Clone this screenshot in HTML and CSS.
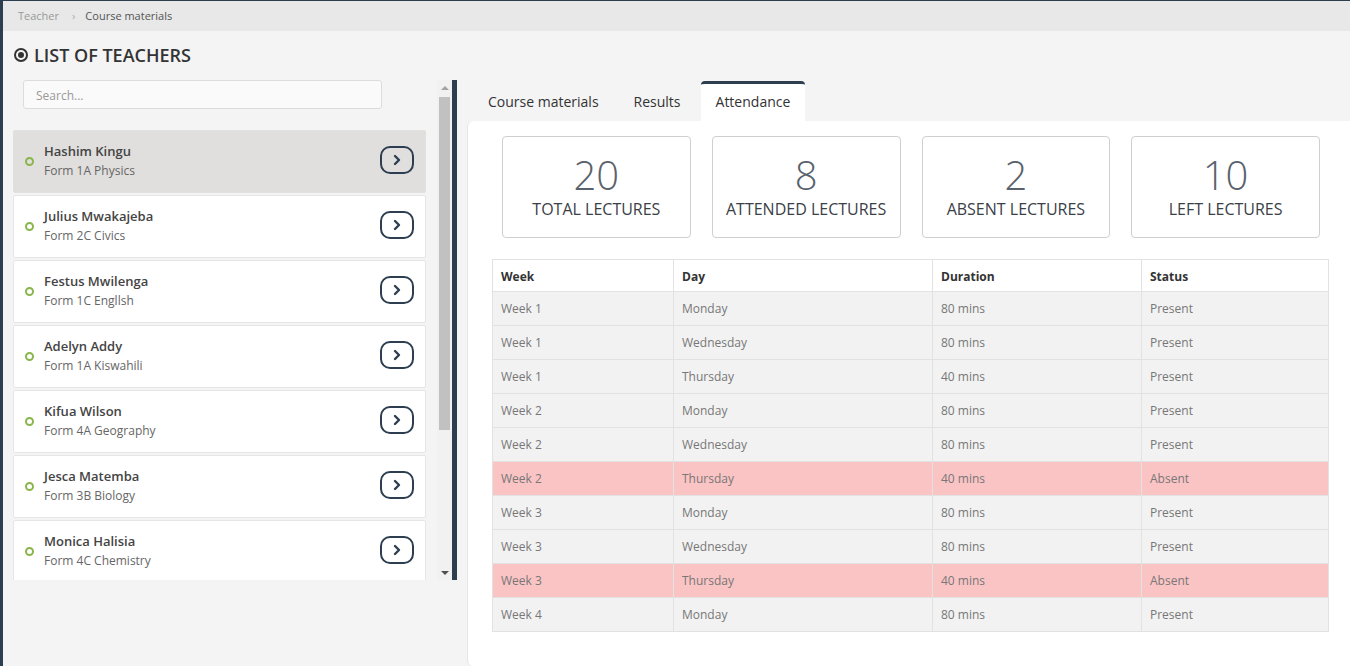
FILE: index.html
```html
<!DOCTYPE html>
<html>
<head>
<meta charset="utf-8">
<title>Course materials</title>
<link rel="stylesheet" href="styles.css">
</head>
<body>
<div class="app">
  <div class="breadcrumb">
    <span class="crumb">Teacher</span>
    <span class="sep">›</span>
    <span class="crumb current">Course materials</span>
  </div>
  <h1 class="title"><span class="radio-icon"><span></span></span>LIST OF TEACHERS</h1>
  <div class="content">
    <div class="left">
      <div class="list">
        <input class="search" type="text" placeholder="Search...">
        <div class="item selected">
          <span class="dot"></span>
          <div class="info"><div class="name">Hashim Kingu</div><div class="sub">Form 1A Physics</div></div>
          <span class="go"><svg viewBox="0 0 10 12" width="10" height="12"><path d="M3 2 L7 6 L3 10" fill="none" stroke="#2c3e50" stroke-width="2.4" stroke-linecap="round" stroke-linejoin="round"/></svg></span>
        </div>
        <div class="item">
          <span class="dot"></span>
          <div class="info"><div class="name">Julius Mwakajeba</div><div class="sub">Form 2C Civics</div></div>
          <span class="go"><svg viewBox="0 0 10 12" width="10" height="12"><path d="M3 2 L7 6 L3 10" fill="none" stroke="#2c3e50" stroke-width="2.4" stroke-linecap="round" stroke-linejoin="round"/></svg></span>
        </div>
        <div class="item">
          <span class="dot"></span>
          <div class="info"><div class="name">Festus Mwilenga</div><div class="sub">Form 1C Engllsh</div></div>
          <span class="go"><svg viewBox="0 0 10 12" width="10" height="12"><path d="M3 2 L7 6 L3 10" fill="none" stroke="#2c3e50" stroke-width="2.4" stroke-linecap="round" stroke-linejoin="round"/></svg></span>
        </div>
        <div class="item">
          <span class="dot"></span>
          <div class="info"><div class="name">Adelyn Addy</div><div class="sub">Form 1A Kiswahili</div></div>
          <span class="go"><svg viewBox="0 0 10 12" width="10" height="12"><path d="M3 2 L7 6 L3 10" fill="none" stroke="#2c3e50" stroke-width="2.4" stroke-linecap="round" stroke-linejoin="round"/></svg></span>
        </div>
        <div class="item">
          <span class="dot"></span>
          <div class="info"><div class="name">Kifua Wilson</div><div class="sub">Form 4A Geography</div></div>
          <span class="go"><svg viewBox="0 0 10 12" width="10" height="12"><path d="M3 2 L7 6 L3 10" fill="none" stroke="#2c3e50" stroke-width="2.4" stroke-linecap="round" stroke-linejoin="round"/></svg></span>
        </div>
        <div class="item">
          <span class="dot"></span>
          <div class="info"><div class="name">Jesca Matemba</div><div class="sub">Form 3B Biology</div></div>
          <span class="go"><svg viewBox="0 0 10 12" width="10" height="12"><path d="M3 2 L7 6 L3 10" fill="none" stroke="#2c3e50" stroke-width="2.4" stroke-linecap="round" stroke-linejoin="round"/></svg></span>
        </div>
        <div class="item">
          <span class="dot"></span>
          <div class="info"><div class="name">Monica Halisia</div><div class="sub">Form 4C Chemistry</div></div>
          <span class="go"><svg viewBox="0 0 10 12" width="10" height="12"><path d="M3 2 L7 6 L3 10" fill="none" stroke="#2c3e50" stroke-width="2.4" stroke-linecap="round" stroke-linejoin="round"/></svg></span>
        </div>
      </div>
      <div class="scrollbar">
        <div class="sb-btn"><span class="arrow up"></span></div>
        <div class="sb-track"><div class="sb-thumb"></div></div>
        <div class="sb-btn"><span class="arrow down"></span></div>
      </div>
    </div>
    <div class="right">
      <div class="tabs">
        <span class="tab">Course materials</span>
        <span class="tab">Results</span>
        <span class="tab active">Attendance</span>
      </div>
      <div class="card">
        <div class="stats">
          <div class="stat"><div class="num">20</div><div class="label">TOTAL LECTURES</div></div>
          <div class="stat"><div class="num">8</div><div class="label">ATTENDED LECTURES</div></div>
          <div class="stat"><div class="num">2</div><div class="label">ABSENT LECTURES</div></div>
          <div class="stat"><div class="num">10</div><div class="label">LEFT LECTURES</div></div>
        </div>
        <table class="att">
          <colgroup><col class="c1"><col class="c2"><col class="c3"><col class="c4"></colgroup>
          <thead><tr><th>Week</th><th>Day</th><th>Duration</th><th>Status</th></tr></thead>
          <tbody>
            <tr><td>Week 1</td><td>Monday</td><td>80 mins</td><td>Present</td></tr>
            <tr><td>Week 1</td><td>Wednesday</td><td>80 mins</td><td>Present</td></tr>
            <tr><td>Week 1</td><td>Thursday</td><td>40 mins</td><td>Present</td></tr>
            <tr><td>Week 2</td><td>Monday</td><td>80 mins</td><td>Present</td></tr>
            <tr><td>Week 2</td><td>Wednesday</td><td>80 mins</td><td>Present</td></tr>
            <tr class="absent"><td>Week 2</td><td>Thursday</td><td>40 mins</td><td>Absent</td></tr>
            <tr><td>Week 3</td><td>Monday</td><td>80 mins</td><td>Present</td></tr>
            <tr><td>Week 3</td><td>Wednesday</td><td>80 mins</td><td>Present</td></tr>
            <tr class="absent"><td>Week 3</td><td>Thursday</td><td>40 mins</td><td>Absent</td></tr>
            <tr><td>Week 4</td><td>Monday</td><td>80 mins</td><td>Present</td></tr>
          </tbody>
        </table>
      </div>
    </div>
  </div>
</div>
</body>
</html>
```

FILE: styles.css
```css
* { box-sizing: border-box; }
html, body { margin: 0; padding: 0; height: 100%; }
body {
  background: #2c3e50;
  font-family: "Open Sans", "Liberation Sans", sans-serif;
  overflow: hidden;
}
.app {
  margin: 1px 0 0 3px;
  height: 665px;
  background: #f4f4f4;
  display: flex;
  flex-direction: column;
}
.breadcrumb {
  height: 30px;
  background: #e8e8e8;
  display: flex;
  align-items: center;
  padding: 0 0 2px 15px;
  font-size: 11px;
  color: #999;
  flex-shrink: 0;
}
.breadcrumb .sep { margin: 0 10px 0 13px; color: #aaa; }
.breadcrumb .current { color: #555; }
.title {
  margin: 12px 0 0 11px;
  font-size: 18px;
  line-height: 24px;
  font-weight: 600;
  color: #333;
  display: flex;
  align-items: center;
}
.radio-icon {
  width: 14px;
  height: 14px;
  border: 2px solid #333;
  border-radius: 50%;
  display: flex;
  align-items: center;
  justify-content: center;
  margin-right: 6px;
}
.radio-icon span {
  width: 6px;
  height: 6px;
  background: #333;
  border-radius: 50%;
}
.content {
  display: flex;
  margin-top: 13px;
  padding-left: 10px;
  flex: 1;
  gap: 10px;
  min-height: 0;
}
.left {
  width: 444px;
  height: 500px;
  flex-shrink: 0;
  display: flex;
  border-right: 5px solid #2c3e50;
}
.list {
  flex: 1;
  overflow: hidden;
  padding-right: 11px;
}
.scrollbar {
  width: 15px;
  background: #f1f1f1;
  display: flex;
  flex-direction: column;
}
.sb-btn {
  height: 15px;
  display: flex;
  align-items: center;
  justify-content: center;
}
.arrow {
  width: 0;
  height: 0;
  border-left: 4px solid transparent;
  border-right: 4px solid transparent;
}
.arrow.up { border-bottom: 4px solid #a3a3a3; }
.arrow.down { border-top: 4px solid #505050; }
.sb-track { flex: 1; padding: 2px 2px 0 2px; }
.sb-thumb { height: 333px; background: #c1c1c1; }
.search {
  display: block;
  margin: 0 0 21px 10px;
  width: 359px;
  height: 29px;
  border: 1px solid #dcdcdc;
  border-radius: 3px;
  background: #fafafa;
  padding: 2px 12px 0;
  font-family: inherit;
  font-size: 12px;
  color: #555;
  outline: none;
}
.search::placeholder { color: #999; }
.item {
  height: 63px;
  margin-bottom: 2px;
  background: #fff;
  border: 1px solid #e6e6e6;
  border-radius: 2px;
  display: flex;
  align-items: center;
  padding: 0 11px;
}
.item.selected { background: #e0dfdd; border-color: #e2e1df; }
.dot {
  width: 9px;
  height: 9px;
  border: 2px solid #8ab54a;
  border-radius: 50%;
  flex-shrink: 0;
  margin-right: 10px;
}
.info { flex: 1; margin-top: -1px; }
.name { font-size: 13px; line-height: 20px; font-weight: 600; color: #444; }
.sub { font-size: 12px; line-height: 20px; color: #666; }
.go {
  width: 34px;
  height: 28px;
  border: 2px solid #2c3e50;
  border-radius: 10px;
  display: flex;
  align-items: center;
  justify-content: center;
  margin-top: -3px;
}
.go svg { display: block; }
.right {
  flex: 1;
  display: flex;
  flex-direction: column;
  min-width: 0;
}
.tabs {
  display: flex;
  gap: 5px;
  margin-top: 1px;
  padding-left: 6px;
  height: 40px;
  flex-shrink: 0;
}
.tab {
  padding: 0 15px 2px;
  display: flex;
  align-items: center;
  font-size: 14px;
  color: #333;
  border-top: 3px solid transparent;
  border-radius: 4px 4px 0 0;
}
.tab.active { background: #fff; border-top-color: #2c3e50; }
.card {
  flex: 1;
  background: #fff;
  border-left: 1px solid #e6e6e6;
  border-radius: 6px 0 0 6px;
  padding: 15px 21px 0 24px;
}
.stats {
  display: grid;
  grid-template-columns: repeat(4, 1fr);
  gap: 21px;
  padding: 0 9px 0 10px;
}
.stat {
  height: 102px;
  border: 1px solid #cfcfcf;
  border-radius: 4px;
  text-align: center;
  padding-top: 16px;
}
.num {
  font-size: 40px;
  line-height: 44px;
  font-weight: 300;
  color: #59626c;
}
.label {
  font-size: 16px;
  line-height: 24px;
  color: #3a4046;
}
.att {
  margin-top: 21px;
  width: 100%;
  border-collapse: collapse;
  table-layout: fixed;
  font-size: 12px;
}
.c1 { width: 181px; }
.c2 { width: 259px; }
.c3 { width: 209px; }
.c4 { width: auto; }
.att th, .att td {
  border: 1px solid #e2e2e2;
  text-align: left;
  padding: 0 8px;
}
.att th {
  height: 32px;
  font-weight: 700;
  color: #333;
  background: #fff;
  padding-top: 1px;
}
.att td {
  height: 34px;
  color: #777;
  background: #f2f2f2;
}
.att tr.absent td { background: #fbc4c4; }
```
